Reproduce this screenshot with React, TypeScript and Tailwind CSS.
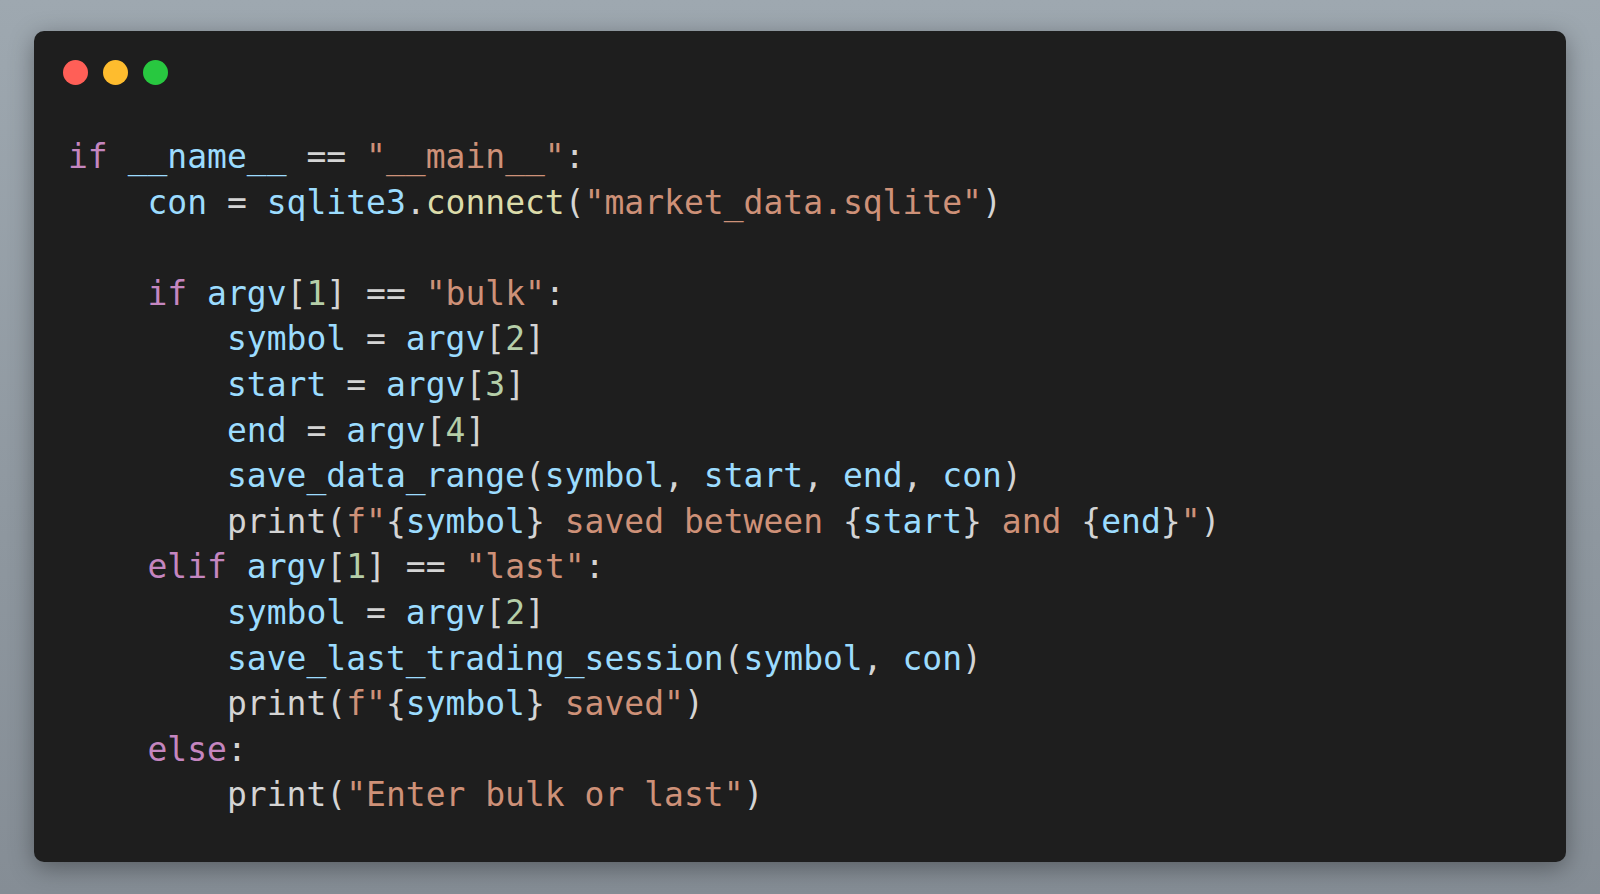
const C = {
  kw: "text-[#c586c0]",
  v: "text-[#9cdcfe]",
  s: "text-[#ce9178]",
  f: "text-[#dcdcaa]",
  n: "text-[#b5cea8]",
  p: "text-[#d4d4d4]",
};

type Tok = [string, string];

const lines: Tok[][] = [
  [[C.kw, "if"], [C.p, " "], [C.v, "__name__"], [C.p, " == "], [C.s, '"__main__"'], [C.p, ":"]],
  [[C.p, "    "], [C.v, "con"], [C.p, " = "], [C.v, "sqlite3"], [C.p, "."], [C.f, "connect"], [C.p, "("], [C.s, '"market_data.sqlite"'], [C.p, ")"]],
  [],
  [[C.p, "    "], [C.kw, "if"], [C.p, " "], [C.v, "argv"], [C.p, "["], [C.n, "1"], [C.p, "] == "], [C.s, '"bulk"'], [C.p, ":"]],
  [[C.p, "        "], [C.v, "symbol"], [C.p, " = "], [C.v, "argv"], [C.p, "["], [C.n, "2"], [C.p, "]"]],
  [[C.p, "        "], [C.v, "start"], [C.p, " = "], [C.v, "argv"], [C.p, "["], [C.n, "3"], [C.p, "]"]],
  [[C.p, "        "], [C.v, "end"], [C.p, " = "], [C.v, "argv"], [C.p, "["], [C.n, "4"], [C.p, "]"]],
  [[C.p, "        "], [C.v, "save_data_range"], [C.p, "("], [C.v, "symbol"], [C.p, ", "], [C.v, "start"], [C.p, ", "], [C.v, "end"], [C.p, ", "], [C.v, "con"], [C.p, ")"]],
  [[C.p, "        print("], [C.s, 'f"'], [C.p, "{"], [C.v, "symbol"], [C.p, "}"], [C.s, " saved between "], [C.p, "{"], [C.v, "start"], [C.p, "}"], [C.s, " and "], [C.p, "{"], [C.v, "end"], [C.p, "}"], [C.s, '"'], [C.p, ")"]],
  [[C.p, "    "], [C.kw, "elif"], [C.p, " "], [C.v, "argv"], [C.p, "["], [C.n, "1"], [C.p, "] == "], [C.s, '"last"'], [C.p, ":"]],
  [[C.p, "        "], [C.v, "symbol"], [C.p, " = "], [C.v, "argv"], [C.p, "["], [C.n, "2"], [C.p, "]"]],
  [[C.p, "        "], [C.v, "save_last_trading_session"], [C.p, "("], [C.v, "symbol"], [C.p, ", "], [C.v, "con"], [C.p, ")"]],
  [[C.p, "        print("], [C.s, 'f"'], [C.p, "{"], [C.v, "symbol"], [C.p, "}"], [C.s, ' saved"'], [C.p, ")"]],
  [[C.p, "    "], [C.kw, "else"], [C.p, ":"]],
  [[C.p, "        print("], [C.s, '"Enter bulk or last"'], [C.p, ")"]],
];

export default function App() {
  return (
    <div className="w-[1600px] h-[894px] overflow-hidden bg-[linear-gradient(180deg,#9ea8b0_0%,#8e979f_60%,#858d95_100%)] pt-[31px] pb-[32px] px-[34px]">
      <div className="h-full rounded-[10px] bg-[#1e1e1e] shadow-[0_6px_24px_rgba(0,0,0,0.35)] flex flex-col">
        {/* window controls */}
        <div className="flex gap-[15px] pl-[29px] pt-[29px]">
          <span className="w-[25px] h-[25px] rounded-full bg-[#ff5f57]" />
          <span className="w-[25px] h-[25px] rounded-full bg-[#febc2e]" />
          <span className="w-[25px] h-[25px] rounded-full bg-[#28c840]" />
        </div>

        <pre className="mt-[49px] pl-[34px] font-['DejaVu_Sans_Mono',monospace] text-[33px] leading-[45.6px] text-[#d4d4d4]">
          {lines.map((toks, i) => (
            <div key={i} className="h-[45.6px] whitespace-pre">
              {toks.map(([cls, t], j) => (
                <span key={j} className={cls}>
                  {t}
                </span>
              ))}
            </div>
          ))}
        </pre>
      </div>
    </div>
  );
}
